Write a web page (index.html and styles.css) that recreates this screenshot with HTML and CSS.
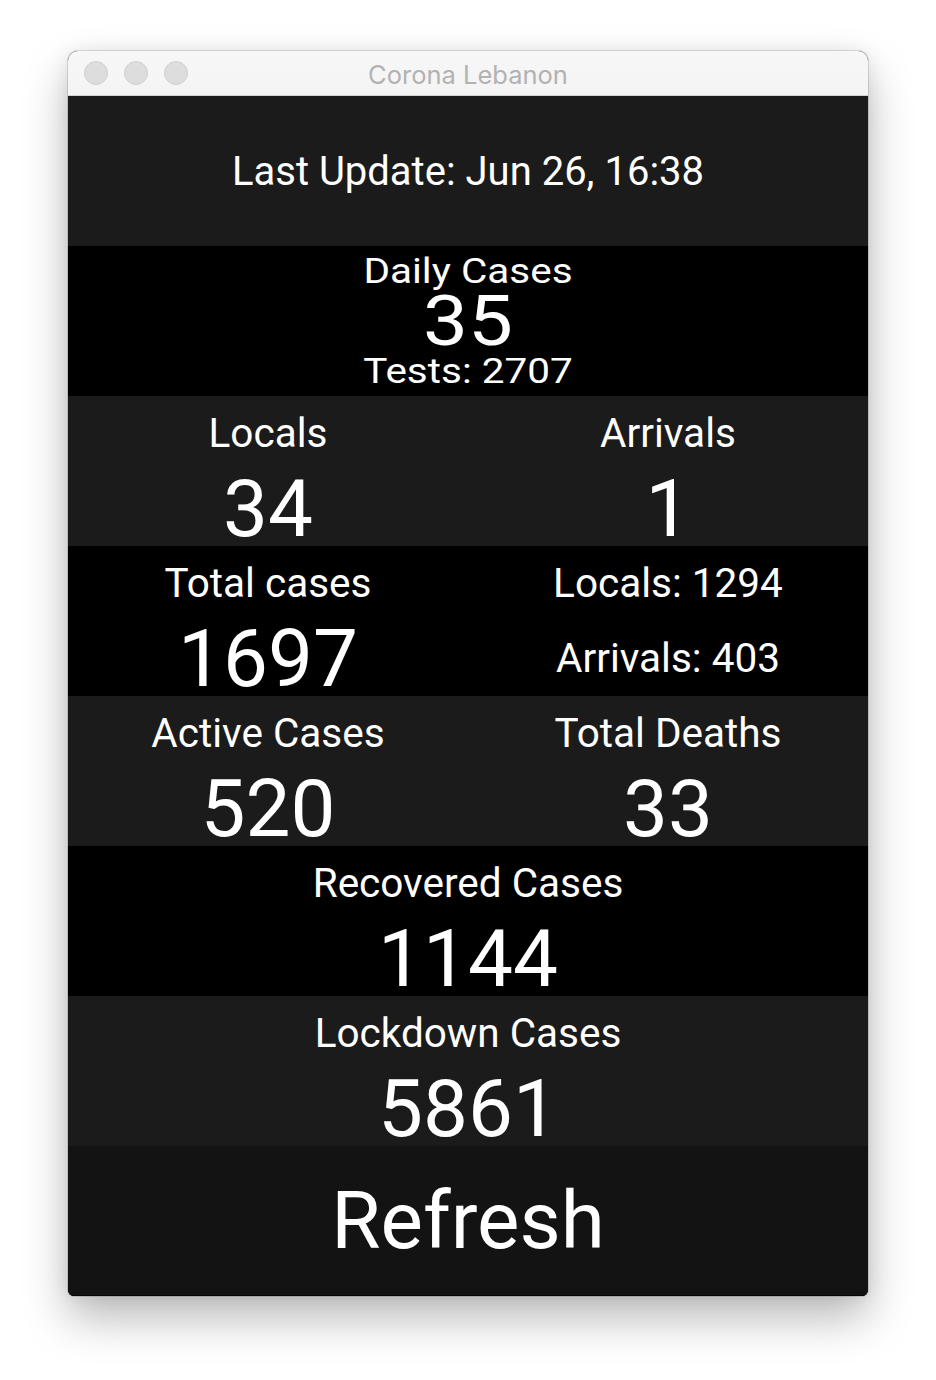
FILE: index.html
```html
<!DOCTYPE html>
<html lang="en">
<head>
<meta charset="utf-8">
<title>Corona Lebanon</title>
<link rel="stylesheet" href="styles.css">
</head>
<body>
<div class="window">
  <div class="titlebar">
    <div class="lights">
      <span class="light"></span>
      <span class="light"></span>
      <span class="light"></span>
    </div>
    <div class="title">Corona Lebanon</div>
  </div>
  <div class="content">
    <div class="row gray">
      <div class="cell"><div class="line update">Last Update: Jun 26, 16:38</div></div>
    </div>
    <div class="row black">
      <div class="cell">
        <div class="line label squish">Daily Cases</div>
        <div class="line number squish">35</div>
        <div class="line label squish">Tests: 2707</div>
      </div>
    </div>
    <div class="row gray">
      <div class="cell">
        <div class="line label">Locals</div>
        <div class="line number">34</div>
      </div>
      <div class="cell">
        <div class="line label">Arrivals</div>
        <div class="line number">1</div>
      </div>
    </div>
    <div class="row black">
      <div class="cell">
        <div class="line label">Total cases</div>
        <div class="line number">1697</div>
      </div>
      <div class="cell">
        <div class="line label">Locals: 1294</div>
        <div class="line label">Arrivals: 403</div>
      </div>
    </div>
    <div class="row gray">
      <div class="cell">
        <div class="line label">Active Cases</div>
        <div class="line number">520</div>
      </div>
      <div class="cell">
        <div class="line label">Total Deaths</div>
        <div class="line number">33</div>
      </div>
    </div>
    <div class="row black">
      <div class="cell">
        <div class="line label">Recovered Cases</div>
        <div class="line number">1144</div>
      </div>
    </div>
    <div class="row gray">
      <div class="cell">
        <div class="line label">Lockdown Cases</div>
        <div class="line number">5861</div>
      </div>
    </div>
    <div class="row refresh">
      <div class="cell"><div class="line refresh-text">Refresh</div></div>
    </div>
  </div>
</div>
</body>
</html>
```
FILE: styles.css
```css
html, body {
  margin: 0;
  padding: 0;
  background: #ffffff;
}

body {
  padding-top: 51px;
  height: 1380px;
  box-sizing: border-box;
}

.window {
  width: 800px;
  margin: 0 auto;
  border-radius: 10px 10px 6px 6px;
  overflow: hidden;
  box-shadow: 0 0 0 1px rgba(0, 0, 0, 0.12), 0 22px 45px rgba(0, 0, 0, 0.28), 0 0 18px rgba(0, 0, 0, 0.08);
  background: #141414;
}

.titlebar {
  height: 44px;
  border-bottom: 1px solid #d4d4d4;
  background: linear-gradient(#f7f7f7, #f4f4f4);
  display: flex;
  align-items: center;
  position: relative;
}

.lights {
  display: flex;
  gap: 16px;
  padding-left: 16px;
}

.light {
  width: 22px;
  height: 22px;
  border-radius: 50%;
  background: #dddddd;
  border: 1px solid #d0d0d0;
}

.title {
  position: absolute;
  left: 0;
  right: 0;
  top: 0;
  bottom: 0;
  display: flex;
  align-items: center;
  justify-content: center;
  font-family: "Inter", "Noto Sans", sans-serif;
  font-size: 25.5px;
  color: #b2b2b2;
  padding-top: 3px;
}

.content {
  display: flex;
  flex-direction: column;
  font-family: "Roboto", sans-serif;
  color: #ffffff;
}

.row {
  height: 150px;
  display: flex;
}

.gray { background: #1b1b1b; }
.black { background: #000000; }
.refresh { background: #131313; border-bottom: 1px solid #050505; height: 149px; }

.cell {
  flex: 1;
  display: flex;
  flex-direction: column;
  min-width: 0;
}

.line {
  flex: 1 1 0;
  min-height: 0;
  display: flex;
  align-items: center;
  justify-content: center;
  line-height: 1;
  white-space: nowrap;
}

.update { font-size: 40px; padding-top: 2px; }

.label { font-size: 40.5px; }

.number { font-size: 80px; }

.squish { transform: scaleY(0.88); }

.refresh-text { font-size: 80px; }
```
